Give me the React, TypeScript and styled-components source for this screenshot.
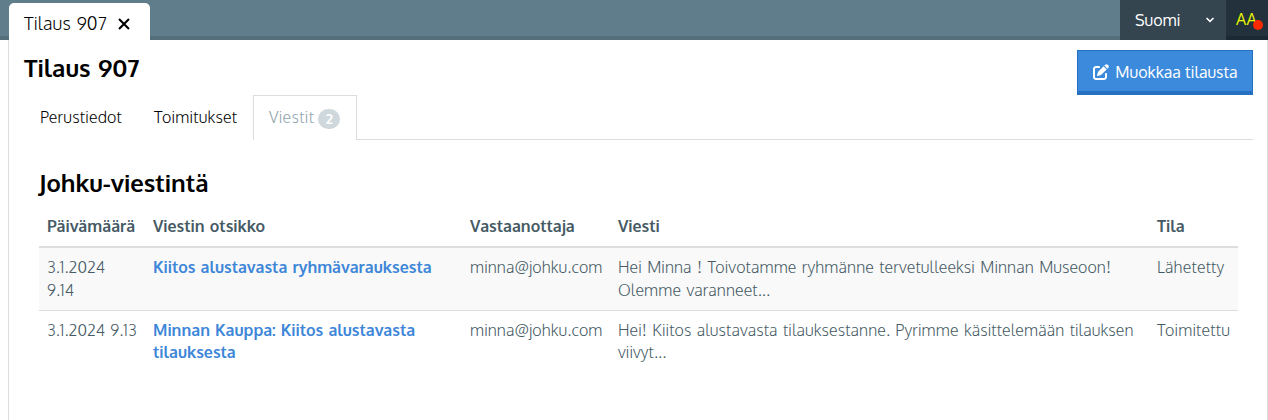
import React from "react";
import styled, { createGlobalStyle } from "styled-components";
import { FaPenToSquare } from "react-icons/fa6";

const Global = createGlobalStyle`
  * { box-sizing: border-box; }
  body {
    margin: 0;
    background: #fff;
    color: #455a64;
    font-family: Oxygen, "Noto Sans", "Open Sans", sans-serif;
    font-size: 16px;
    font-weight: 300;
    line-height: 22.86px;
  }
`;

const Page = styled.div`
  height: 420px;
  display: flex;
  flex-direction: column;
  overflow: hidden;
`;

const TopBar = styled.header`
  height: 40px;
  flex: none;
  display: flex;
  align-items: flex-end;
  padding-left: 9px;
  background: #607d8b;
  box-shadow: inset 0 -4px 0 #546e7a;
`;

const WindowTab = styled.div`
  width: 141px;
  height: 37px;
  padding: 4px 0 0 15px;
  display: flex;
  align-items: center;
  gap: 11px;
  margin-right: auto;
  color: #000;
  background: #fff;
  border-radius: 5px 5px 0 0;
  font-size: 18px;
  white-space: nowrap;
`;

const Language = styled.div`
  width: 106px;
  height: 40px;
  padding: 0 11px 0 15px;
  display: flex;
  align-items: center;
  justify-content: space-between;
  color: #fff;
  background: #344550;
  font-weight: 400;
`;

const Account = styled.div`
  position: relative;
  width: 42px;
  height: 40px;
  padding: 8px 0 0 10px;
  color: #e6f500;
  background: #22313c;
  box-shadow: inset 0 -4px 0 #1c2833;
  font-weight: 400;
`;

const Dot = styled.span`
  position: absolute;
  left: 27px;
  top: 20px;
  width: 10px;
  height: 10px;
  border-radius: 50%;
  background: #ff2a00;
`;

const Panel = styled.main`
  flex: 1;
  margin-left: 8px;
  padding: 0 14px 0 15px;
  border: solid #ddd;
  border-width: 0 1px;
`;

const TitleRow = styled.div`
  height: 55px;
  padding-top: 10px;
  display: flex;
  align-items: flex-start;
  justify-content: space-between;
`;

const Title = styled.h1`
  margin: 4px 0 0;
  color: #000;
  font-size: 24px;
  line-height: 28px;
  font-weight: 700;
  word-spacing: 1px;
  white-space: nowrap;
`;

const EditButton = styled.button`
  width: 176px;
  height: 45px;
  padding: 2px 0 0 1px;
  display: flex;
  align-items: center;
  justify-content: center;
  gap: 6px;
  color: #fff;
  background: #3c8adb;
  border: 1px solid #2570c0;
  border-bottom-width: 4px;
  font: inherit;
  font-weight: 400;
  white-space: nowrap;
`;

const Tabs = styled.nav`
  height: 45px;
  display: flex;
  border-bottom: 1px solid #ddd;
`;

const TabItem = styled.div<{ $w: number; $active?: boolean }>`
  width: ${(p) => p.$w}px;
  height: 45px;
  padding: 0 0 1px ${(p) => (p.$active ? 15 : 16)}px;
  display: flex;
  align-items: center;
  gap: 4px;
  color: ${(p) => (p.$active ? "#90a4ae" : "#000")};
  background: #fff;
  border: ${(p) => (p.$active ? "1px solid #ddd" : "0")};
  border-bottom: 0;
  white-space: nowrap;
`;

const Badge = styled.span`
  width: 22px;
  height: 20px;
  margin-top: 3px;
  border-radius: 10px;
  background: #cfd8dc;
  color: #fff;
  font-size: 14px;
  line-height: 20px;
  font-weight: 700;
  text-align: center;
`;

const Section = styled.section`
  padding: 29px 15px 0;
`;

const SectionTitle = styled(Title).attrs({ as: "h2" })`
  margin: 0 0 10px;
`;

const Table = styled.table`
  width: 1199px;
  table-layout: fixed;
  border-collapse: separate;
  border-spacing: 0;
`;

const Th = styled.th<{ $w: number }>`
  width: ${(p) => p.$w}px;
  padding: 8px;
  text-align: left;
  font-weight: 600;
  word-spacing: 1px;
  border-bottom: 2px solid #ddd;
`;

const Row = styled.tr`
  &:nth-child(odd) { background: #f9f9f9; }
  & + & td { border-top: 1px solid #ddd; }
`;

const tracking = [0, 0, 0.08, 0.1, 0.18];

const Td = styled.td<{ $track: number }>`
  padding: 8px;
  vertical-align: top;
  white-space: nowrap;
  letter-spacing: ${(p) => p.$track}px;
  word-spacing: 1.6px;
`;

const Link = styled.a`
  color: #3d86d8;
  font-weight: 600;
  word-spacing: 0.9px;
`;

const Text = styled.span<{ $track?: number; $word?: number }>`
  letter-spacing: ${(p) => p.$track ?? 0}px;
  word-spacing: ${(p) => p.$word ?? 0}px;
`;

const columns: [string, number][] = [
  ["Päivämäärä", 106],
  ["Viestin otsikko", 317],
  ["Vastaanottaja", 148],
  ["Viesti", 539],
  ["Tila", 89],
];

const rows: string[][][] = [
  [
    ["3.1.2024", "9.14"],
    ["Kiitos alustavasta ryhmävarauksesta"],
    ["minna@johku.com"],
    ["Hei Minna ! Toivotamme ryhmänne tervetulleeksi Minnan Museoon!", "Olemme varanneet..."],
    ["Lähetetty"],
  ],
  [
    ["3.1.2024 9.13"],
    ["Minnan Kauppa: Kiitos alustavasta", "tilauksesta"],
    ["minna@johku.com"],
    ["Hei! Kiitos alustavasta tilauksestanne. Pyrimme käsittelemään tilauksen", "viivyt..."],
    ["Toimitettu"],
  ],
];

function Lines({ lines }: { lines: string[] }) {
  return (
    <>
      {lines.map((text, i) => (
        <React.Fragment key={i}>
          {i > 0 && <br />}
          {text}
        </React.Fragment>
      ))}
    </>
  );
}

export default function App() {
  return (
    <Page>
      <Global />
      <TopBar>
        <WindowTab>
          <Text $track={0.15} $word={1.5}>Tilaus 907</Text>
          <svg width="12" height="12" viewBox="0 0 12 12" stroke="#000" strokeWidth="2.1">
            <path d="M1 1 11 11M11 1 1 11" />
          </svg>
        </WindowTab>
        <Language>
          <Text>Suomi</Text>
          <svg width="10" height="6" viewBox="0 0 10 6" fill="none" stroke="#fff" strokeWidth="1.6">
            <path d="M1.5 1 5 4.3 8.5 1" />
          </svg>
        </Language>
        <Account>
          <Text $track={0.4}>AA</Text>
          <Dot />
        </Account>
      </TopBar>
      <Panel>
        <TitleRow>
          <Title>Tilaus 907</Title>
          <EditButton>
            <FaPenToSquare size={16} />
            <Text>Muokkaa tilausta</Text>
          </EditButton>
        </TitleRow>
        <Tabs>
          <TabItem $w={114}><Text $track={0.2}>Perustiedot</Text></TabItem>
          <TabItem $w={115}><Text $track={0.2}>Toimitukset</Text></TabItem>
          <TabItem $w={104} $active>
            <Text $track={0.35}>Viestit</Text>
            <Badge>2</Badge>
          </TabItem>
        </Tabs>
        <Section>
          <SectionTitle>Johku-viestintä</SectionTitle>
          <Table>
            <thead>
              <tr>
                {columns.map(([label, w]) => (
                  <Th key={label} $w={w}>{label}</Th>
                ))}
              </tr>
            </thead>
            <tbody>
              {rows.map((cells, r) => (
                <Row key={r}>
                  {cells.map((lines, c) => (
                    <Td key={c} $track={tracking[c]}>
                      {c === 1 ? <Link><Lines lines={lines} /></Link> : <Lines lines={lines} />}
                    </Td>
                  ))}
                </Row>
              ))}
            </tbody>
          </Table>
        </Section>
      </Panel>
    </Page>
  );
}
